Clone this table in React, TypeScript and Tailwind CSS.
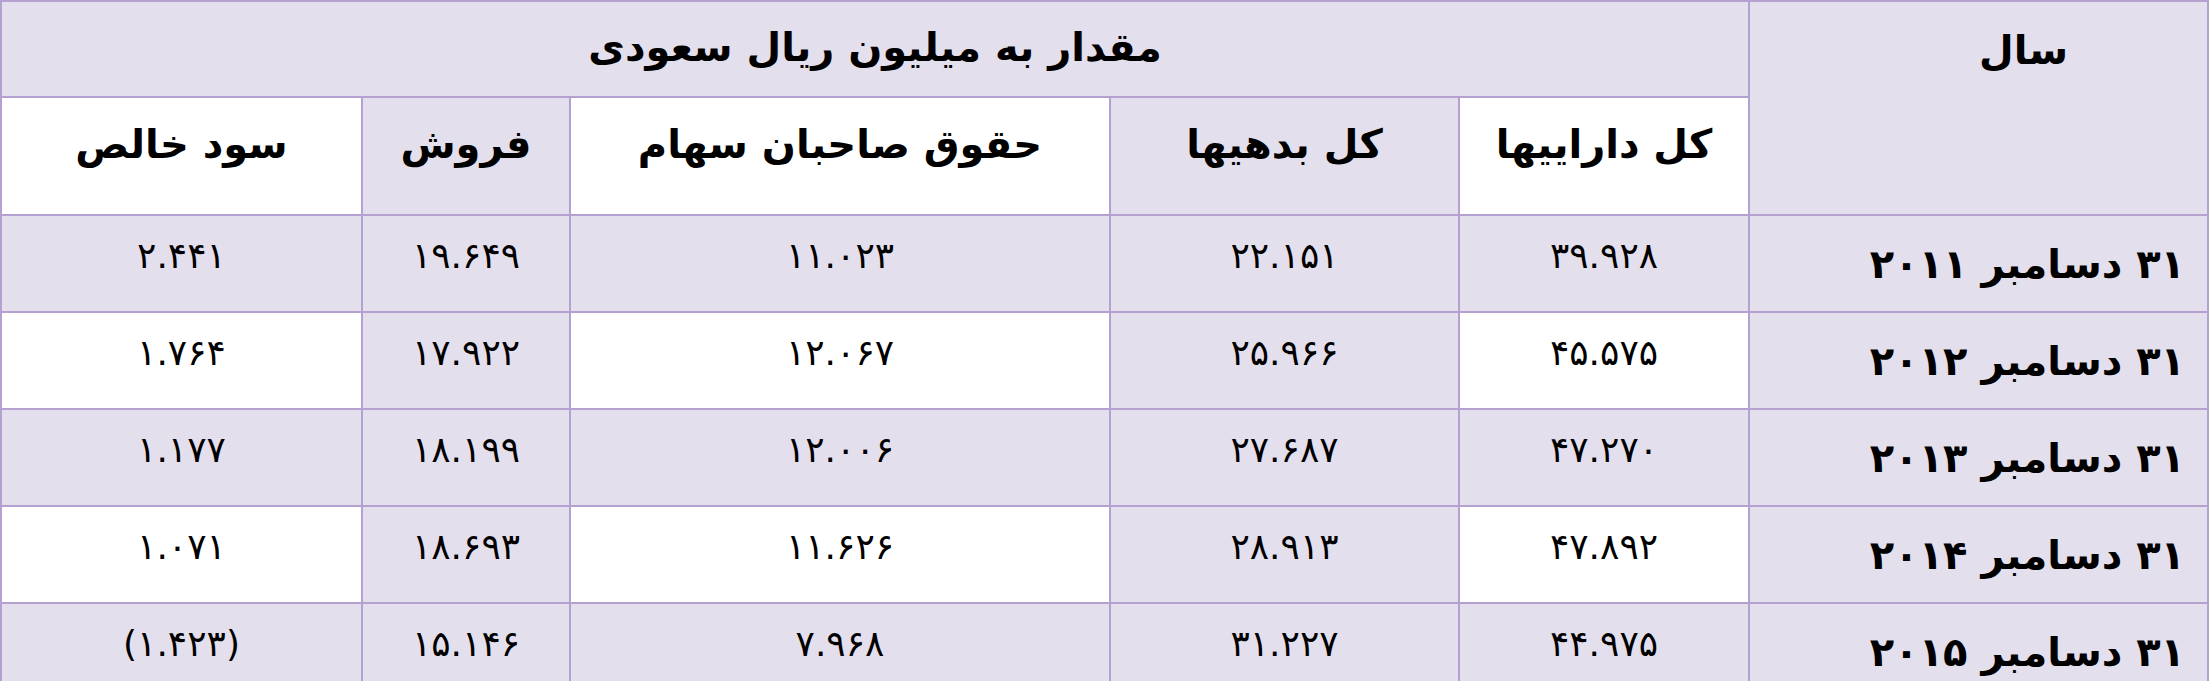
import React from "react";

type Row = {
  year: string;
  assets: string;
  debts: string;
  equity: string;
  sales: string;
  profit: string;
  shaded: boolean;
};

const rows: Row[] = [
  { year: "۳۱ دسامبر ۲۰۱۱", assets: "۳۹.۹۲۸", debts: "۲۲.۱۵۱", equity: "۱۱.۰۲۳", sales: "۱۹.۶۴۹", profit: "۲.۴۴۱", shaded: true },
  { year: "۳۱ دسامبر ۲۰۱۲", assets: "۴۵.۵۷۵", debts: "۲۵.۹۶۶", equity: "۱۲.۰۶۷", sales: "۱۷.۹۲۲", profit: "۱.۷۶۴", shaded: false },
  { year: "۳۱ دسامبر ۲۰۱۳", assets: "۴۷.۲۷۰", debts: "۲۷.۶۸۷", equity: "۱۲.۰۰۶", sales: "۱۸.۱۹۹", profit: "۱.۱۷۷", shaded: true },
  { year: "۳۱ دسامبر ۲۰۱۴", assets: "۴۷.۸۹۲", debts: "۲۸.۹۱۳", equity: "۱۱.۶۲۶", sales: "۱۸.۶۹۳", profit: "۱.۰۷۱", shaded: false },
  { year: "۳۱ دسامبر ۲۰۱۵", assets: "۴۴.۹۷۵", debts: "۳۱.۲۲۷", equity: "۷.۹۶۸", sales: "۱۵.۱۴۶", profit: "(۱.۴۲۳)", shaded: true },
];

const lav = "bg-[#e4dfed]";
const cell = "border-2 border-[#b4a1d0] p-0 text-center";
const head = "text-[40px] font-bold";
const num = "text-[36px] font-normal pb-[16px]";

export default function App() {
  return (
    <div className="w-[2210px] h-[681px] overflow-hidden bg-white" style={{ fontFamily: '"DejaVu Sans", sans-serif' }}>
      <table dir="rtl" className="table-fixed border-collapse w-[2209px] text-black">
        <colgroup>
          <col className="w-[459px]" />
          <col className="w-[290px]" />
          <col className="w-[349px]" />
          <col className="w-[540px]" />
          <col className="w-[208px]" />
          <col className="w-[361px]" />
        </colgroup>
        <thead>
          <tr className="h-[96px]">
            <th rowSpan={2} className={`${cell} ${lav} ${head} align-top pt-[18px] pl-[90px]`}>
              سال
            </th>
            <th colSpan={5} className={`${cell} ${lav} ${head} pb-[4px]`}>
              مقدار به میلیون ریال سعودی
            </th>
          </tr>
          <tr className="h-[118px]">
            <th className={`${cell} bg-white ${head} align-top pt-[16px]`}>کل داراییها</th>
            <th className={`${cell} ${lav} ${head} align-top pt-[16px]`}>کل بدهیها</th>
            <th className={`${cell} bg-white ${head} align-top pt-[16px]`}>حقوق صاحبان سهام</th>
            <th className={`${cell} ${lav} ${head} align-top pt-[16px]`}>فروش</th>
            <th className={`${cell} bg-white ${head} align-top pt-[16px]`}>سود خالص</th>
          </tr>
        </thead>
        <tbody>
          {rows.map((r) => (
            <tr key={r.year} className={`h-[97px] ${lav}`}>
              <td className={`${cell} text-right pr-[22px] text-[40px] font-bold`}>{r.year}</td>
              <td className={`${cell} ${num} ${r.shaded ? "" : "bg-white"}`}>{r.assets}</td>
              <td className={`${cell} ${num}`}>{r.debts}</td>
              <td className={`${cell} ${num} ${r.shaded ? "" : "bg-white"}`}>{r.equity}</td>
              <td className={`${cell} ${num}`}>{r.sales}</td>
              <td className={`${cell} ${num} ${r.shaded ? "" : "bg-white"}`}>{r.profit}</td>
            </tr>
          ))}
        </tbody>
      </table>
    </div>
  );
}
